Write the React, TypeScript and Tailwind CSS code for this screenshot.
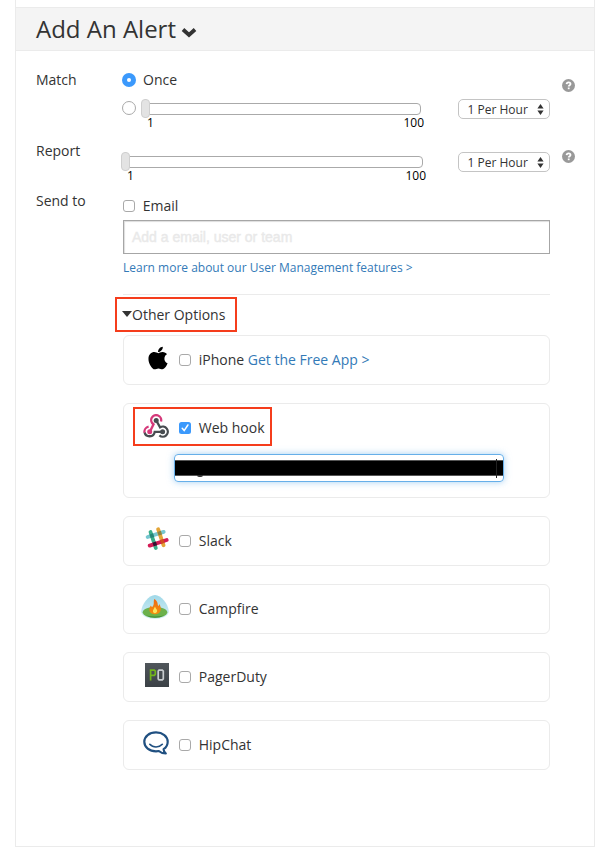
import type { ReactNode } from "react";
import { FaApple } from "react-icons/fa";

function CheckBox({ checked = false }: { checked?: boolean }) {
  if (checked) {
    return (
      <span className="flex size-3 shrink-0 items-center justify-center rounded-[2.5px] bg-[#3b99fc]">
        <svg viewBox="0 0 12 12" className="size-3">
          <path d="M3.2 6.3 5.2 8.6 8.9 3" fill="none" stroke="#fff" strokeWidth="1.5" strokeLinecap="round" />
        </svg>
      </span>
    );
  }
  return <span className="size-3 shrink-0 rounded-[3px] border border-[#a9a9a9] bg-white" />;
}

function Radio({ checked = false }: { checked?: boolean }) {
  return checked ? (
    <span className="flex size-3.5 shrink-0 items-center justify-center rounded-full bg-[#3b99fc]">
      <span className="size-1 rounded-full bg-white" />
    </span>
  ) : (
    <span className="size-3.5 shrink-0 rounded-full border border-[#a9a9a9] bg-white" />
  );
}

function Track({ className }: { className: string }) {
  return (
    <div className={`relative h-3 rounded-[4px] border border-[#aaa] bg-white ${className}`}>
      <span className="absolute -left-[5px] -top-[5px] h-[19px] w-[9px] rounded-[4px] border border-[#cfcfcf] bg-[#e3e3e3]" />
    </div>
  );
}

function RateSelect() {
  return (
    <div className="flex h-5 w-[92px] items-center justify-between rounded-[5px] border border-[#c4c4c4] bg-white pl-[8.5px] pr-[5px] text-[12px] leading-none text-[#333]">
      <span className="pt-[2px]">1 Per Hour</span>
      <svg viewBox="0 0 7 11" className="h-[11px] w-[7px]" fill="#333">
        <path d="M3.500 0 6.600 4.600H.4zM3.500 11 .4 6.400h6.200z" />
      </svg>
    </div>
  );
}

function Help() {
  return (
    <span className="flex size-[13px] items-center justify-center rounded-full bg-[#999]">
      <svg viewBox="0 0 13 13" className="size-[13px]">
        <path d="M4.6 5.1C4.7 3.9 5.5 3.3 6.6 3.3c1.100 0 1.900.600 1.900 1.600 0 1.300-1.800 1.300-1.800 2.700" fill="none" stroke="#fff" strokeWidth="1.800" />
        <rect x="5.800" y="8.500" width="1.800" height="1.700" fill="#fff" />
      </svg>
    </span>
  );
}

function WebhookIcon() {
  return (
    <svg viewBox="0 0 26 24" className="h-6 w-[26px]" fill="none" strokeWidth="2.300" strokeLinecap="butt">
      <path d="M18 7.500A5 5 0 1 0 10.500 10.300L7 17.500" stroke="#d5397a" />
      <path d="M1.500 18.300A5.200 5.200 0 0 0 11.700 17.800H19.600" stroke="#474c50" />
      <path d="M13.200 6.500 17.100 13.400A5 5 0 1 1 16.400 21.300" stroke="#474c50" />
      <path d="M5.600 12.700A5.200 5.200 0 0 0 1.500 18.600" stroke="#d5397a" />
      <circle cx="13.200" cy="6.600" r="2.500" fill="#474c50" />
      <circle cx="6.700" cy="17.800" r="2.500" fill="#d5397a" />
      <circle cx="19.600" cy="17.800" r="2.500" fill="#474c50" />
    </svg>
  );
}

function SlackIcon() {
  return (
    <svg viewBox="0 0 24 24" className="ml-px size-6" fill="none" strokeWidth="3.800" strokeLinecap="round">
      <path d="M2.600 10 18.700 4.900" stroke="#77c7d0" />
      <path d="M13.200 2.300 18.500 18.200" stroke="#e3a436" />
      <path d="M5.500 5 10.800 21" stroke="#39ae88" />
      <path d="M4.700 18.600 21.700 13" stroke="#d31b55" />
      <path d="m5.200 9.200 3.400-1.100" stroke="#278577" strokeLinecap="butt" />
      <path d="m13 6.700 3.400-1.100" stroke="#868446" strokeLinecap="butt" />
      <path d="m8.100 17.500 3.400-1.100" stroke="#331433" strokeLinecap="butt" />
      <path d="m15.600 15 3.400-1.100" stroke="#d24a21" strokeLinecap="butt" />
    </svg>
  );
}

function CampfireIcon() {
  return (
    <svg viewBox="0 0 28 24" className="-ml-[2px] h-6 w-7 shrink-0">
      <defs>
        <linearGradient id="sky" x1="0" x2="0" y1="0" y2="1">
          <stop offset="0" stopColor="#9fd8e8" />
          <stop offset="1" stopColor="#d5eff5" />
        </linearGradient>
        <linearGradient id="flame" x1="0" x2="0" y1="0" y2="1">
          <stop offset="0" stopColor="#ed6a16" />
          <stop offset="1" stopColor="#f4900e" />
        </linearGradient>
      </defs>
      <path d="M14 0C20 0 27.500 9 27.800 16.500 27.800 21 21 24 14 24S.2 21 .2 16.500C.5 9 8 0 14 0Z" fill="url(#sky)" />
      <ellipse cx="14" cy="17.300" rx="12.300" ry="5.500" fill="#6cb14b" />
      <path d="M5 20.500Q14 25 23 20.500Q14 22.500 5 20.500Z" fill="#3f8d37" />
      <path d="M13.300 4C18 7 15.800 9.500 17.600 11L18.400 9C21.500 14.500 19.300 19.300 14 19.300S6.800 15 9.800 10.500L11 12.300C14 9.500 12 7 13.300 4Z" fill="url(#flame)" />
      <path d="M14 11.500C14.600 14 16.800 14.500 16 16.800 15 19 11.500 18.500 12 15.500Z" fill="#ffe45d" />
    </svg>
  );
}

function PagerDutyIcon() {
  return (
    <span className="ml-[2px] block size-6 bg-linear-to-b from-[#50565b] to-[#3b4146]">
      <svg viewBox="0 0 24 24" className="size-6" fill="none" strokeWidth="1.700">
        <path d="M5.600 17.500V7.200H9.300L10.300 8.200V11.300L9.300 12.300H5.600" stroke="#72b51b" />
        <path d="M14 7.200H17.300L18.300 8.200V15.800L17.300 16.800H14L13.200 16V8Z" stroke="#c8cccf" />
      </svg>
    </span>
  );
}

function HipChatIcon() {
  return (
    <svg viewBox="0 0 26 24" className="h-6 w-[26px]" fill="none" stroke="#205081" strokeLinecap="round" strokeLinejoin="round">
      <path d="M20.600 18.200C23.400 16.300 24.700 13.700 24.700 10.800 24.700 5.300 19.600 1.400 13 1.400S1.300 5.300 1.300 10.800 6.400 20.300 13 20.300L15.800 20C17.500 21.500 20 22.500 22.800 22.500 21.500 21.300 20.600 19.800 20.600 18.200Z" strokeWidth="2.200" />
      <path d="M6.800 13.300C10 16.900 16 16.900 19.300 13.300" strokeWidth="1.700" />
    </svg>
  );
}

function OptionCard({ icon, children, label, checked }: { icon: ReactNode; label: ReactNode; checked?: boolean; children?: ReactNode }) {
  return (
    <div className={`rounded-[6px] border border-[#ebebeb] ${children ? "h-[95px]" : "h-[50px]"}`}>
      <div className="relative flex h-12 items-center">
        {children && <span className="absolute left-[9px] top-[3px] h-[39px] w-[139px] border-2 border-[#f53d1c]" />}
        <span className="-mt-1 mb-px ml-[13px] flex w-[38px] shrink-0 items-center justify-center">{icon}</span>
        <span className="ml-1 flex items-center gap-[7.75px]">
          <CheckBox checked={checked} />
          <span>{label}</span>
        </span>
      </div>
      {children}
    </div>
  );
}

export default function App() {
  return (
    <div className="h-[847px] w-[610px] bg-white pl-[15px] font-['Open_Sans','Noto_Sans',sans-serif] text-[14px] leading-5 text-[#333]">
      <main className="flex h-full w-[580px] flex-col border-x border-b border-[#ebebeb] pt-[7px]">
        <header className="flex h-11 shrink-0 items-center border-y border-[#ebebeb] bg-[#f4f4f4] pl-5">
          <h1 className="text-[24px] leading-8">Add An Alert</h1>
          <svg viewBox="0 0 16 11" className="ml-[5px] mt-1.5 h-[11px] w-4">
            <path d="M2 2.500 8 8 14 2.500" fill="none" stroke="#333" strokeWidth="3.800" />
          </svg>
        </header>

        <section className="flex h-[85px] shrink-0 pl-5">
          <div className="w-[86px] pt-[19px]">Match</div>
          <div className="w-[336px] pt-[19px]">
            <div className="flex h-5 items-center gap-[7px]">
              <Radio checked />
              <span>Once</span>
            </div>
            <div className="mt-2 flex h-5 items-center">
              <Radio />
              <Track className="ml-[9px] mt-[2px] w-[276px]" />
            </div>
            <div className="-mt-[5px] flex w-[303px] justify-between pl-[25px] text-[12px] text-black">
              <span>1</span>
              <span className="-mr-px w-[22.5px]">100</span>
            </div>
          </div>
          <div className="w-[104px] pt-12"><RateSelect /></div>
          <div className="pt-7"><Help /></div>
        </section>

        <section className="flex h-[50px] shrink-0 pl-5">
          <div className="w-[86px] pt-[5px]">Report</div>
          <div className="w-[336px] pt-5">
            <Track className="ml-[3px] w-[298px]" />
            <div className="-mt-[2px] flex w-[305px] justify-between pl-[5px] text-[12px] text-black">
              <span>1</span>
              <span className="-mr-px w-[22.5px]">100</span>
            </div>
          </div>
          <div className="w-[104px] pt-4"><RateSelect /></div>
          <div className="pt-[14px]"><Help /></div>
        </section>

        <section className="flex pl-5">
          <div className="w-[87px] pt-[5px]">Send to</div>
          <div className="w-[427px] pt-[10px]">
            <div className="flex items-center gap-[7.75px]">
              <CheckBox />
              <span>Email</span>
            </div>
            <div className="mt-1 flex h-[34px] items-center border border-[#a6a6a6] pl-2 font-['Liberation_Sans',sans-serif] text-[14px] text-[#e9e9e9] shadow-[inset_1px_1px_1px_#ddd] [-webkit-text-stroke:0.4px_#e9e9e9]">
              Add a email, user or team
            </div>
            <a className="mt-1 block text-[12px] leading-5 text-[#337ab7]">Learn more about our User Management features &gt;</a>
            <div className="relative mt-4 flex h-[41px] items-center border-t border-[#ebebeb]">
              <span className="absolute -left-2 top-[2px] h-[35px] w-[122px] border-2 border-[#f53d1c]" />
              <svg viewBox="0 0 10 6" className="-ml-px -mt-[3px] h-1.5 w-2.5">
                <path d="M0 0h10L5 6Z" fill="#333" />
              </svg>
              <span>Other Options</span>
            </div>
            <div className="flex flex-col gap-[18px]">
              <OptionCard icon={<FaApple className="ml-1 size-[26px] text-black" />} label={<>iPhone <a className="text-[#337ab7]">Get the Free App &gt;</a></>} />
              <OptionCard icon={<WebhookIcon />} label="Web hook" checked>
                <div className="ml-[50px] mt-[2px] flex h-7 w-[330px] items-center rounded-[4px] border border-[#66afe9] shadow-[0_0_7px_rgba(102,175,233,0.6)]">
                  <span className="relative h-4 w-full border-y border-[#555] bg-black">
                    <span className="absolute -top-[2px] right-1.5 h-[19px] w-px bg-[#222]" />
                    <span className="absolute -bottom-[2px] left-[22px] h-[2px] w-1.5 rounded-b-full bg-[#333]" />
                  </span>
                </div>
              </OptionCard>
              <OptionCard icon={<SlackIcon />} label="Slack" />
              <OptionCard icon={<CampfireIcon />} label="Campfire" />
              <OptionCard icon={<PagerDutyIcon />} label="PagerDuty" />
              <OptionCard icon={<HipChatIcon />} label="HipChat" />
            </div>
          </div>
        </section>
      </main>
    </div>
  );
}
